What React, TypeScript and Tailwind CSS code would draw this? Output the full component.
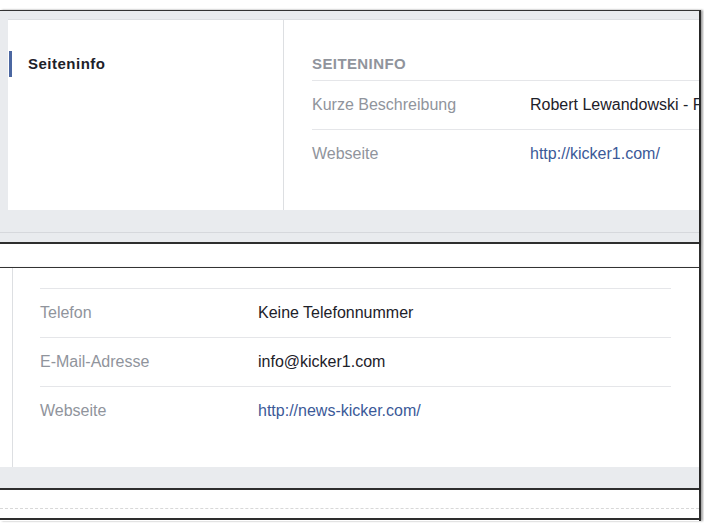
import React from "react";

const font = { fontFamily: '"Liberation Sans", Arial, Helvetica, sans-serif' };

function Row({ label, value, link }: { label: string; value: string; link?: boolean }) {
  return (
    <div className="flex h-[49px] items-center border-t border-[#e5e6e9] whitespace-nowrap">
      <div className="w-[218px] shrink-0 text-[16px] text-[#90949c]">{label}</div>
      <div className={"text-[16px] " + (link ? "text-[#3b5998]" : "text-[#1d2129]")}>{value}</div>
    </div>
  );
}

export default function App() {
  return (
    <div className="h-[523px] w-[704px] overflow-hidden bg-white pt-[10px]" style={font}>
      <div className="w-[701px] border-r-2 border-[#2e2e2e] shadow-[2px_0_2px_rgba(0,0,0,0.35)]">
        {/* Panel 1 */}
        <div className="border-t border-[#333333] border-b-2 border-b-[#2e2e2e] bg-[#e9ebee] shadow-[0_2px_3px_rgba(0,0,0,0.45)]">
          <div className="pl-[8px] pt-[8px]">
            <div className="flex h-[191px] overflow-hidden border-t border-[#dddfe2] bg-white">
              <div className="w-[276px] shrink-0 border-r border-[#dddfe2] pl-[1px] pt-[31px]">
                <div className="flex h-[26px] items-center border-l-[3px] border-[#4b67a1] pl-[16px] text-[15px] font-bold tracking-[0.5px] text-[#1d2129]">
                  Seiteninfo
                </div>
              </div>
              <div className="flex-1 overflow-hidden pl-[28px]">
                <div className="flex h-[60px] items-end pb-[6px] text-[15px] font-bold tracking-[0.4px] text-[#90949c]">
                  <div className="h-[20px] leading-[20px]">SEITENINFO</div>
                </div>
                <Row label="Kurze Beschreibung" value="Robert Lewandowski - Fußball" />
                <Row label="Webseite" value="http://kicker1.com/" link />
              </div>
            </div>
          </div>
          <div className="h-[22px]" />
          <div className="h-[1px] bg-[#d6d8dc]" />
          <div className="h-[9px]" />
        </div>

        <div className="h-[23px] bg-white" />

        {/* Panel 2 */}
        <div className="border-t border-[#333333] border-b-2 border-b-[#2e2e2e] bg-white shadow-[0_2px_3px_rgba(0,0,0,0.45)]">
          <div className="flex h-[199px]">
            <div className="w-[12px] shrink-0" />
            <div className="flex-1 border-l border-[#dddfe2] pl-[27px] pr-[28px] pt-[20px]">
              <Row label="Telefon" value="Keine Telefonnummer" />
              <Row label="E-Mail-Adresse" value="info@kicker1.com" />
              <Row label="Webseite" value="http://news-kicker.com/" link />
            </div>
          </div>
          <div className="h-[21px] bg-[#e9ebee]" />
        </div>

        {/* Panel 3 (partial) */}
        <div className="h-[31px] bg-white pt-[18px]">
          <div className="border-t border-dashed border-[#d8d8d8]" />
          <div className="mt-[9px] h-[2px] bg-[#2e2e2e]" />
        </div>
      </div>
    </div>
  );
}
